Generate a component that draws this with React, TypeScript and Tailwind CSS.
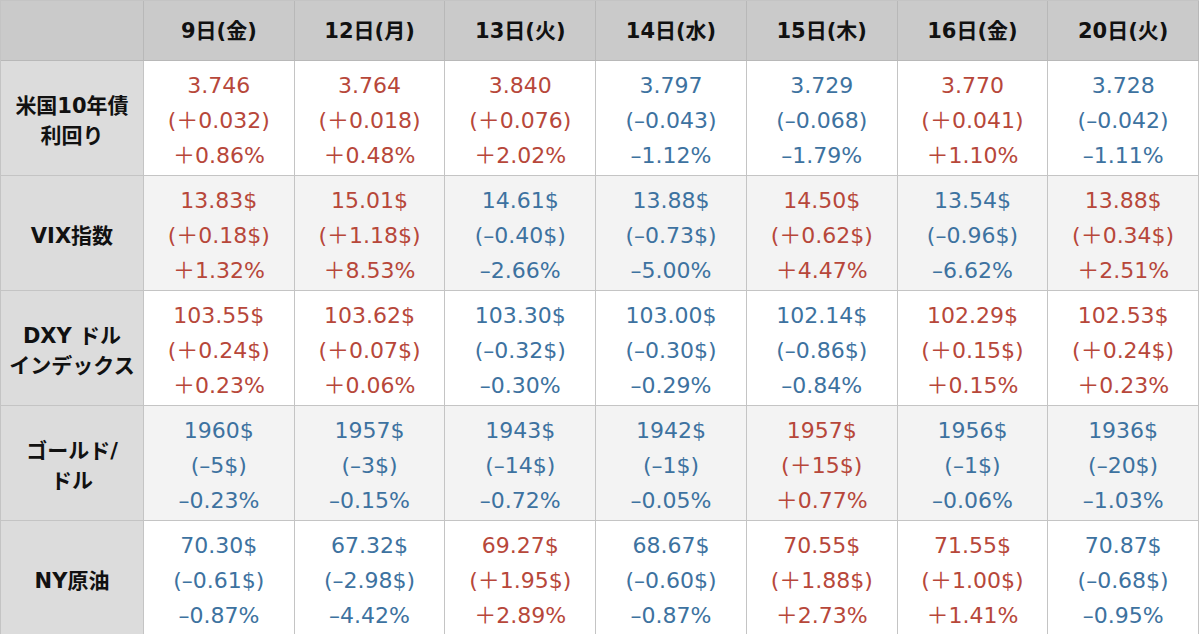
const days = ['9日(金)', '12日(月)', '13日(火)', '14日(水)', '15日(木)', '16日(金)', '20日(火)']

type Cell = [string, string, string]

interface Row {
  label: string[]
  cells: Cell[]
}

const rows: Row[] = [
  {
    label: ['米国10年債', '利回り'],
    cells: [
      ['3.746', '(＋0.032)', '＋0.86%'],
      ['3.764', '(＋0.018)', '＋0.48%'],
      ['3.840', '(＋0.076)', '＋2.02%'],
      ['3.797', '(–0.043)', '–1.12%'],
      ['3.729', '(–0.068)', '–1.79%'],
      ['3.770', '(＋0.041)', '＋1.10%'],
      ['3.728', '(–0.042)', '–1.11%'],
    ],
  },
  {
    label: ['VIX指数'],
    cells: [
      ['13.83$', '(＋0.18$)', '＋1.32%'],
      ['15.01$', '(＋1.18$)', '＋8.53%'],
      ['14.61$', '(–0.40$)', '–2.66%'],
      ['13.88$', '(–0.73$)', '–5.00%'],
      ['14.50$', '(＋0.62$)', '＋4.47%'],
      ['13.54$', '(–0.96$)', '–6.62%'],
      ['13.88$', '(＋0.34$)', '＋2.51%'],
    ],
  },
  {
    label: ['DXY ドル', 'インデックス'],
    cells: [
      ['103.55$', '(＋0.24$)', '＋0.23%'],
      ['103.62$', '(＋0.07$)', '＋0.06%'],
      ['103.30$', '(–0.32$)', '–0.30%'],
      ['103.00$', '(–0.30$)', '–0.29%'],
      ['102.14$', '(–0.86$)', '–0.84%'],
      ['102.29$', '(＋0.15$)', '＋0.15%'],
      ['102.53$', '(＋0.24$)', '＋0.23%'],
    ],
  },
  {
    label: ['ゴールド/', 'ドル'],
    cells: [
      ['1960$', '(–5$)', '–0.23%'],
      ['1957$', '(–3$)', '–0.15%'],
      ['1943$', '(–14$)', '–0.72%'],
      ['1942$', '(–1$)', '–0.05%'],
      ['1957$', '(＋15$)', '＋0.77%'],
      ['1956$', '(–1$)', '–0.06%'],
      ['1936$', '(–20$)', '–1.03%'],
    ],
  },
  {
    label: ['NY原油'],
    cells: [
      ['70.30$', '(–0.61$)', '–0.87%'],
      ['67.32$', '(–2.98$)', '–4.42%'],
      ['69.27$', '(＋1.95$)', '＋2.89%'],
      ['68.67$', '(–0.60$)', '–0.87%'],
      ['70.55$', '(＋1.88$)', '＋2.73%'],
      ['71.55$', '(＋1.00$)', '＋1.41%'],
      ['70.87$', '(–0.68$)', '–0.95%'],
    ],
  },
]

export default function App() {
  return (
    <div className="h-[634px] w-[1200px] overflow-hidden bg-white font-['DejaVu_Sans','Noto_Sans_CJK_JP',sans-serif]">
      <div className="grid w-[1199px] grid-cols-[143px_repeat(7,1fr)] border-l border-t border-[#c4c4c4]">
        <div className="h-[60px] border-b border-r border-[#b8b8b8] bg-[#cacaca]" />
        {days.map((d) => (
          <div
            key={d}
            className="flex h-[60px] items-center justify-center border-b border-r border-[#b8b8b8] bg-[#cacaca] pt-[2px] text-[21px] font-bold text-[#111]"
          >
            {d}
          </div>
        ))}
        {rows.map((row, ri) => (
          <RowCells key={ri} row={row} shaded={ri % 2 === 1} />
        ))}
      </div>
    </div>
  )
}

function RowCells({ row, shaded }: { row: Row; shaded: boolean }) {
  return (
    <>
      <div className="flex h-[115px] flex-col items-center justify-center border-b border-r border-[#c4c4c4] bg-[#dcdcdc] pt-[5px] text-[21px] font-bold leading-[30px] text-[#111]">
        {row.label.map((l) => (
          <span key={l}>{l}</span>
        ))}
      </div>
      {row.cells.map((c, ci) => {
        const up = c[1].includes('＋')
        return (
          <div
            key={ci}
            className={
              'flex h-[115px] flex-col items-center justify-center border-b border-r border-[#c4c4c4] pt-[4px] text-[22px] leading-[35px] ' +
              (shaded ? 'bg-[#f3f3f3] ' : 'bg-white ') +
              (up ? 'text-[#b7473a]' : 'text-[#3d72a0]')
            }
          >
            {c.map((t, i) => (
              <span key={i}>{t}</span>
            ))}
          </div>
        )
      })}
    </>
  )
}
